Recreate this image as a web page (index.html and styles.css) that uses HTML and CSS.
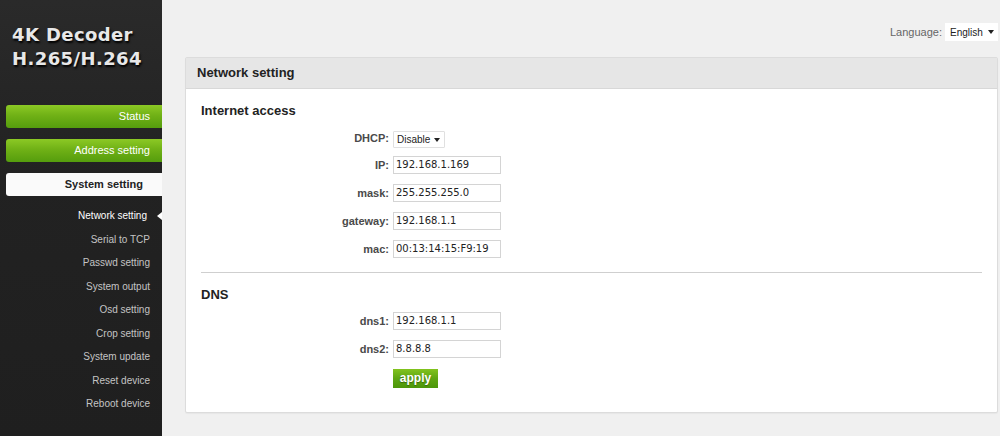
FILE: index.html
```html
<!DOCTYPE html>
<html>
<head>
<meta charset="utf-8">
<title>4K Decoder</title>
<link rel="stylesheet" href="styles.css">
</head>
<body>
<div class="layout">
  <aside class="sidebar">
    <div class="logo">4K Decoder<br>H.265/H.264</div>
    <nav class="menu">
      <a class="menu-btn green">Status</a>
      <a class="menu-btn green">Address setting</a>
      <a class="menu-btn active">System setting</a>
    </nav>
    <ul class="submenu">
      <li class="current">Network setting</li>
      <li>Serial to TCP</li>
      <li>Passwd setting</li>
      <li>System output</li>
      <li>Osd setting</li>
      <li>Crop setting</li>
      <li>System update</li>
      <li>Reset device</li>
      <li>Reboot device</li>
    </ul>
  </aside>
  <main class="main">
    <div class="topbar">
      <span class="lang-label">Language:</span>
      <div class="lang-select">English <span class="caret"></span></div>
    </div>
    <section class="panel">
      <div class="panel-head">Network setting</div>
      <div class="panel-body">
        <h3 class="section-title">Internet access</h3>
        <div class="form">
          <label>DHCP:</label>
          <div class="select">Disable <span class="caret"></span></div>
          <label>IP:</label>
          <div class="input">192.168.1.169</div>
          <label>mask:</label>
          <div class="input">255.255.255.0</div>
          <label>gateway:</label>
          <div class="input">192.168.1.1</div>
          <label>mac:</label>
          <div class="input">00:13:14:15:F9:19</div>
        </div>
        <hr class="divider">
        <h3 class="section-title">DNS</h3>
        <div class="form form-dns">
          <label>dns1:</label>
          <div class="input">192.168.1.1</div>
          <label>dns2:</label>
          <div class="input">8.8.8.8</div>
          <span></span>
          <div class="apply">apply</div>
        </div>
      </div>
    </section>
  </main>
</div>
</body>
</html>
```

FILE: styles.css
```css
html, body {
  margin: 0;
  padding: 0;
  height: 100%;
}
body {
  font-family: "Liberation Sans", Arial, sans-serif;
  background: #f0f0f0;
  color: #333;
}
.layout {
  display: flex;
  min-height: 436px;
}
.sidebar {
  width: 162px;
  flex: none;
  background: #242424;
  background-image: linear-gradient(180deg, #2a2a2a 0%, #222 40%, #1f1f1f 100%);
}
.logo {
  font-family: "DejaVu Sans", sans-serif;
  font-weight: bold;
  font-size: 18px;
  line-height: 24px;
  color: #e8e8e8;
  text-shadow: 1px 2px 2px #000;
  padding: 23px 0 0 12px;
  height: 61px;
  letter-spacing: 0.4px;
}
.menu {
  display: flex;
  flex-direction: column;
  gap: 11px;
  padding: 21px 0 0 6px;
}
.menu-btn {
  display: block;
  height: 23px;
  line-height: 23px;
  text-align: right;
  padding-right: 12px;
  font-size: 11px;
  border-radius: 3px 0 0 3px;
}
.menu-btn.green {
  color: #fff;
  background: linear-gradient(180deg, #8cc925 0%, #70b116 45%, #559d0d 100%);
}
.menu-btn.active {
  background: #fafafa;
  color: #222;
  font-weight: bold;
  padding-right: 19px;
}
.submenu {
  list-style: none;
  margin: 0;
  padding: 12px 0 0 0;
}
.submenu li {
  position: relative;
  height: 23.5px;
  line-height: 16px;
  font-size: 10px;
  color: #c4c4c4;
  text-align: right;
  padding-right: 12px;
}
.submenu li.current {
  color: #fff;
  padding-right: 15px;
}
.submenu li.current::after {
  content: "";
  position: absolute;
  right: 0;
  top: 4px;
  border-style: solid;
  border-width: 4px 5px 4px 0;
  border-color: transparent #fff transparent transparent;
}
.main {
  flex: 1;
  padding: 0 2px 0 23px;
}
.topbar {
  display: flex;
  justify-content: flex-end;
  align-items: center;
  gap: 3px;
  height: 18px;
  margin-top: 23px;
  margin-bottom: 16px;
}
.lang-label {
  font-size: 11px;
  color: #666;
}
.lang-select {
  display: flex;
  align-items: center;
  justify-content: space-between;
  width: 44px;
  height: 18px;
  padding: 0 4px 0 5px;
  background: #fff;
  font-size: 10px;
  color: #222;
}
.caret {
  display: inline-block;
  border-style: solid;
  border-width: 4px 3px 0 3px;
  border-color: #222 transparent transparent transparent;
}
.panel {
  background: #fff;
  border: 1px solid #dcdcdc;
  border-radius: 2px;
  box-shadow: 0 1px 1px rgba(0,0,0,0.04);
}
.panel-head {
  height: 30px;
  line-height: 30px;
  background: #e6e6e6;
  border-bottom: 1px solid #d8d8d8;
  padding-left: 11px;
  font-weight: bold;
  font-size: 13px;
  color: #222;
}
.panel-body {
  padding: 14px 15px 24px 15px;
}
.section-title {
  margin: 0;
  font-size: 13px;
  line-height: 16px;
  font-weight: bold;
  color: #222;
}
.form {
  display: grid;
  grid-template-columns: 188px 108px;
  column-gap: 4px;
  row-gap: 10px;
  align-items: center;
  margin-top: 11px;
}
.form-dns {
  margin-top: 9px;
}
.form label {
  text-align: right;
  font-weight: bold;
  font-size: 11px;
  color: #4a4a4a;
}
.select {
  display: flex;
  align-items: center;
  justify-content: space-between;
  box-sizing: border-box;
  width: 52px;
  height: 17px;
  padding: 0 4px 0 3px;
  border: 1px solid #e0e0e0;
  border-radius: 1px;
  font-size: 10px;
  color: #222;
  margin-top: 1px;
  margin-bottom: -2px;
}
.input {
  box-sizing: border-box;
  height: 18px;
  line-height: 16px;
  border: 1px solid #d4d4d4;
  padding-left: 2px;
  font-family: "DejaVu Sans", sans-serif;
  font-size: 10px;
  color: #222;
}
.divider {
  border: 0;
  border-top: 1px solid #cfcfcf;
  margin: 14px 0 14px 0;
}
.apply {
  width: 45px;
  height: 19px;
  line-height: 18px;
  text-align: center;
  color: #fff;
  font-weight: bold;
  font-size: 12px;
  text-shadow: 0 1px 1px rgba(0,0,0,0.35);
  background: linear-gradient(180deg, #82c31e 0%, #5ea612 50%, #4c960a 100%);
  margin-top: 1px;
}
```
